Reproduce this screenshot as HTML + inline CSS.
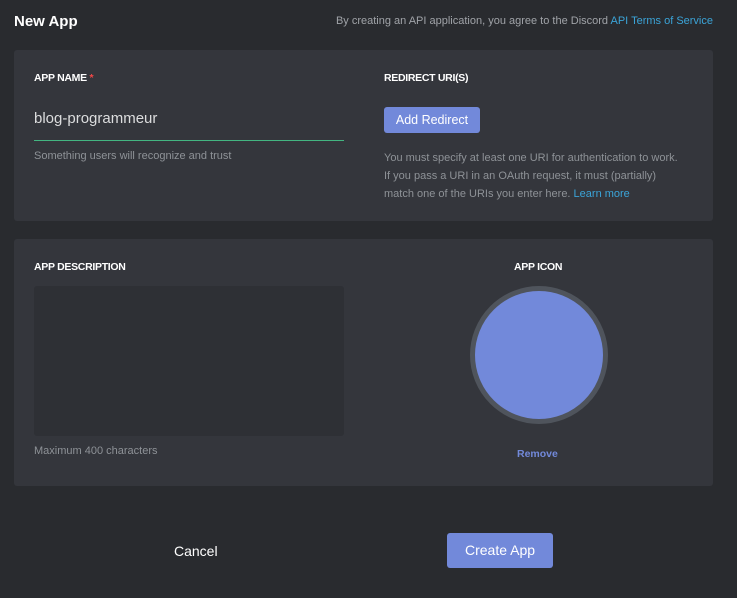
<!DOCTYPE html>
<html><head><meta charset="utf-8"><style>
*{margin:0;padding:0;box-sizing:border-box}
body{width:737px;height:598px;background:#292b2f;font-family:"Liberation Sans",sans-serif;position:relative;overflow:hidden;color:#dcddde}
.abs{position:absolute}
.panel{position:absolute;left:14px;width:699px;background:#34363c;border-radius:3px}
.lbl{position:absolute;font-size:10.5px;font-weight:bold;color:#fff;letter-spacing:-0.3px}
.small{font-size:11px;color:#8e9297;white-space:nowrap}
a{color:#3ba4d8;text-decoration:none}
</style></head><body>
<div class="abs" style="left:14px;top:13px;font-size:15px;font-weight:bold;color:#fff">New App</div>
<div class="abs small" style="right:24px;top:15px;font-size:11px;color:#a0a3a8">By creating an API application, you agree to the Discord <a>API Terms of Service</a></div>

<div class="panel" style="top:50px;height:171px"></div>
<div class="lbl" style="left:34px;top:72px">APP NAME <span style="color:#f04747">*</span></div>
<div class="abs" style="left:34px;top:110px;font-size:15px;color:#dcddde">blog-programmeur</div>
<div class="abs" style="left:34px;top:140px;width:310px;height:1px;background:#43b581"></div>
<div class="abs small" style="left:34px;top:150px">Something users will recognize and trust</div>

<div class="lbl" style="left:384px;top:72px">REDIRECT URI(S)</div>
<div class="abs" style="left:384px;top:107px;width:96px;height:26px;background:#7289da;border-radius:3px;color:#fff;font-size:12.5px;text-align:center;line-height:26px">Add Redirect</div>
<div class="abs small" style="left:384px;top:149px;line-height:18px;font-size:11px">You must specify at least one URI for authentication to work.<br>If you pass a URI in an OAuth request, it must (partially)<br>match one of the URIs you enter here. <a>Learn more</a></div>

<div class="panel" style="top:239px;height:247px"></div>
<div class="lbl" style="left:34px;top:261px">APP DESCRIPTION</div>
<div class="abs" style="left:34px;top:286px;width:310px;height:150px;background:#2e3035;border-radius:3px"></div>
<div class="abs small" style="left:34px;top:445px">Maximum 400 characters</div>
<div class="lbl" style="left:514px;top:261px">APP ICON</div>
<div class="abs" style="left:470px;top:286px;width:138px;height:138px;border-radius:50%;background:#7289da;border:5px solid #4f545c"></div>
<div class="abs" style="left:517px;top:448px;font-size:10.5px;font-weight:bold;color:#7289da">Remove</div>

<div class="abs" style="left:174px;top:543px;font-size:14px;color:#fff">Cancel</div>
<div class="abs" style="left:447px;top:533px;width:106px;height:35px;background:#7289da;border-radius:3px;color:#fff;font-size:14px;text-align:center;line-height:35px">Create App</div>
</body></html>
